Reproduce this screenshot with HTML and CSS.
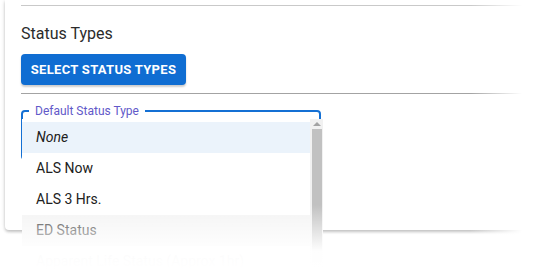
FILE: index.html
```html
<!DOCTYPE html>
<html>
<head>
    <title>Status Types</title>
    <link rel="stylesheet" href="styles.css">
</head>
<body>
    <div class="card">
        <div class="divider divider--light"></div>
        <h2 class="section-title">Status Types</h2>
        <button type="button" class="select-btn">Select Status Types</button>
        <div class="divider"></div>
        <fieldset class="field">
            <legend>Default Status Type</legend>
        </fieldset>
    </div>

    <div class="menu">
        <ul class="menu-list">
            <li class="menu-item menu-item--selected"><em>None</em></li>
            <li class="menu-item">ALS Now</li>
            <li class="menu-item">ALS 3 Hrs.</li>
            <li class="menu-item menu-item--hover">ED Status</li>
            <li class="menu-item">Apparent Life Status (Approx 1hr)</li>
        </ul>
        <div class="scrollbar">
            <div class="scrollbar-arrow"></div>
            <div class="scrollbar-thumb"></div>
        </div>
    </div>

    <div class="fade-right"></div>
</body>
</html>
```

FILE: styles.css
```css
body {
    margin: 0;
    background-color: #fff;
    font-family: Roboto, "Liberation Sans", Arial, sans-serif;
    color: #212121;
    overflow: hidden;
    height: 278px;
}

.card {
    margin-left: 5px;
    width: 600px;
    height: 225px;
    padding: 5px 0 0 16px;
    background-color: #fff;
    border-radius: 0 0 4px 4px;
    box-shadow: 0 2px 3px rgba(0, 0, 0, 0.2), 0 0 5px rgba(0, 0, 0, 0.1);
}

.divider {
    height: 1px;
    background-color: #a3a3a3;
}

.divider--light {
    background-color: #c9c9c9;
}

.section-title {
    margin: 18px 0 0;
    font-size: 16px;
    font-weight: 400;
    line-height: 20px;
    color: #2b2b2b;
}

.select-btn {
    display: block;
    margin: 10px 0 8px;
    height: 31px;
    width: 165px;
    padding: 0;
    border: none;
    border-radius: 4px;
    background-color: #0f6dd2;
    color: #fff;
    font-family: Roboto, "Liberation Sans", Arial, sans-serif;
    font-size: 13px;
    font-weight: 700;
    letter-spacing: 0.3px;
    text-transform: uppercase;
    box-shadow: 0 2px 2px rgba(0, 0, 0, 0.2);
}

.field {
    margin: 10px 0 0;
    width: 290px;
    height: 52px;
    padding: 0 0 0 6px;
    border: 2px solid #1470d4;
    border-radius: 4px;
    box-sizing: content-box;
}

.field legend {
    padding: 0 6px;
    font-size: 12px;
    line-height: 14px;
    color: #6259c9;
}

/* dropdown menu lies over the field */
.menu {
    position: absolute;
    left: 22px;
    top: 119px;
    width: 301px;
    height: 156px;
    display: flex;
    background-color: #fff;
    overflow: hidden;
}

.menu::after {
    content: "";
    position: absolute;
    left: 0;
    top: 0;
    right: 0;
    bottom: 0;
    background: linear-gradient(to bottom, rgba(255, 255, 255, 0) 86px, rgba(255, 255, 255, 0.98) 132px, #fff 150px);
}

.menu-list {
    flex: 1;
    list-style: none;
    margin: 0;
    padding: 3px 0 0;
}

.menu-item {
    height: 31px;
    line-height: 31px;
    padding-left: 14px;
    font-size: 14px;
    white-space: nowrap;
}

.menu-item--selected {
    background-color: #ebf3fb;
}

.menu-item--hover {
    background-color: #f3f3f3;
}

.scrollbar {
    width: 13px;
    background-color: #f1f1f1;
    display: flex;
    flex-direction: column;
}

.scrollbar-arrow {
    height: 10px;
    display: flex;
    justify-content: center;
    align-items: center;
}

.scrollbar-arrow::before {
    content: "";
    border-left: 4px solid transparent;
    border-right: 4px solid transparent;
    border-bottom: 4px solid #a3a3a3;
}

.scrollbar-thumb {
    flex: 1;
    margin: 0 1px 0 2px;
    background-color: #c1c1c1;
}

.fade-right {
    position: absolute;
    top: 0;
    right: 0;
    width: 64px;
    height: 278px;
    background: linear-gradient(to right, rgba(255, 255, 255, 0), #fff 52px);
}
```
